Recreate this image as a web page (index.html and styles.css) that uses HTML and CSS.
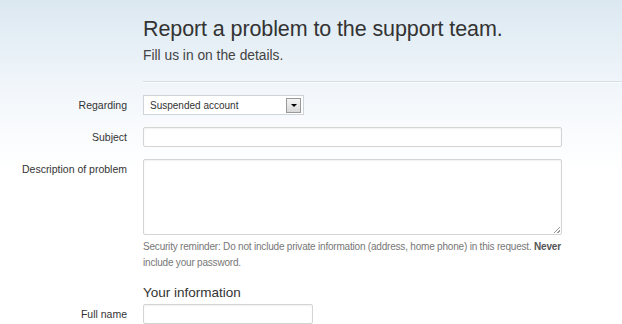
FILE: index.html
```html
<!DOCTYPE html>
<html>
<head>
<meta charset="utf-8">
<link rel="stylesheet" href="styles.css">
</head>
<body>
<div class="page">
  <header class="head">
    <h1 class="title">Report a problem to the support team.</h1>
    <p class="subtitle">Fill us in on the details.</p>
  </header>
  <div class="rule"></div>
  <form class="form">
    <div class="row row-select">
      <label class="label">Regarding</label>
      <div class="select">
        <span class="select-text">Suspended account</span>
        <span class="select-btn"><span class="tri"></span></span>
      </div>
    </div>
    <div class="row">
      <label class="label">Subject</label>
      <div class="input wide"></div>
    </div>
    <div class="row">
      <label class="label">Description of problem</label>
      <div class="field">
        <div class="textarea"><span class="grip"></span></div>
        <p class="help">Security reminder: Do not include private information (address, home phone) in this request. <b>Never</b> include your password.</p>
      </div>
    </div>
    <div class="row section-row">
      <span class="label"></span>
      <h2 class="section">Your information</h2>
    </div>
    <div class="row">
      <label class="label">Full name</label>
      <div class="input short"></div>
    </div>
  </form>
</div>
</body>
</html>
```
FILE: styles.css
```css
html, body {
  margin: 0;
  padding: 0;
}
body {
  width: 622px;
  height: 324px;
  overflow: hidden;
  font-family: "Liberation Sans", Arial, sans-serif;
  color: #333;
  background: linear-gradient(180deg, #dce8f1 0px, #eaf2f8 60px, #f6f9fc 110px, #ffffff 170px);
}
.page {
  padding-top: 14px;
}
.head {
  padding-left: 143px;
}
.title {
  margin: 0;
  font-size: 21.5px;
  font-weight: normal;
  color: #333;
  line-height: 30px;
  letter-spacing: -0.1px;
}
.subtitle {
  margin: 3px 0 0;
  font-size: 13.8px;
  color: #444;
  line-height: 18px;
}
.rule {
  margin: 16px 0 0 143px;
  height: 1px;
  background: #d6dfe6;
  border-bottom: 1px solid #fafcfd;
}
.form {
  margin-top: 12px;
}
.row {
  display: flex;
  align-items: flex-start;
  gap: 16px;
  margin-bottom: 12px;
}
.label {
  width: 127px;
  flex: none;
  text-align: right;
  font-size: 10.5px;
  color: #333;
  line-height: 20px;
}
.select {
  width: 151px;
  height: 18px;
  border: 1px solid #cfd4d8;
  background: #fff;
  display: flex;
  align-items: center;
  justify-content: space-between;
  padding: 0 2px 0 6px;
  box-sizing: content-box;
}
.select-text {
  font-size: 10px;
  color: #333;
}
.select-btn {
  width: 13px;
  height: 13px;
  border: 1px solid #9a9a9a;
  background: linear-gradient(#f4f4f4, #d8d8d8);
  display: flex;
  align-items: center;
  justify-content: center;
}
.tri {
  width: 0;
  height: 0;
  border-left: 3px solid transparent;
  border-right: 3px solid transparent;
  border-top: 3px solid #000;
}
.input {
  height: 18px;
  border: 1px solid #d4d4d4;
  border-radius: 2px;
  background: #fff;
  box-shadow: inset 0 1px 2px rgba(0,0,0,0.06);
}
.wide { width: 417px; }
.short { width: 168px; }
.row-select { margin-bottom: 12px; }
.field {
  width: 419px;
}
.textarea {
  position: relative;
  height: 74px;
  border: 1px solid #d4d4d4;
  border-radius: 2px;
  background: #fff;
  box-shadow: inset 0 1px 2px rgba(0,0,0,0.06);
}
.grip {
  position: absolute;
  right: 1px;
  bottom: 1px;
  width: 6px;
  height: 6px;
  background: linear-gradient(135deg, transparent 45%, #999 45%, #999 55%, transparent 55%, transparent 75%, #999 75%, #999 85%, transparent 85%);
}
.help {
  margin: 4px 0 0;
  font-size: 10px;
  line-height: 16px;
  letter-spacing: -0.2px;
  color: #777;
}
.help b {
  color: #555;
}
.section-row {
  margin-top: 14px;
  margin-bottom: 3px;
}
.section {
  margin: 0;
  font-size: 13.5px;
  font-weight: normal;
  color: #333;
  line-height: 16px;
}
```
